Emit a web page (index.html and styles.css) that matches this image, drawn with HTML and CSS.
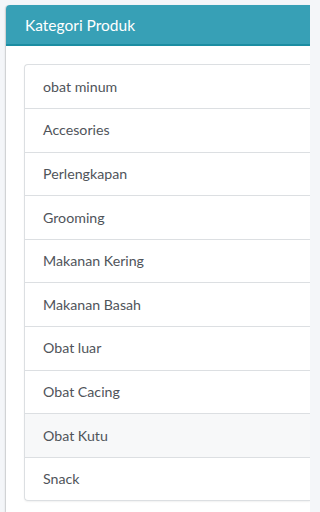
FILE: index.html
```html
<!DOCTYPE html>
<html lang="id">
<head>
<meta charset="utf-8">
<title>Kategori Produk</title>
<link rel="stylesheet" href="styles.css">
</head>
<body>
<div class="card">
  <div class="card-header">
    <h3 class="card-title">Kategori Produk</h3>
  </div>
  <div class="card-body">
    <ul class="list-group">
      <li class="list-group-item">obat minum</li>
      <li class="list-group-item">Accesories</li>
      <li class="list-group-item">Perlengkapan</li>
      <li class="list-group-item">Grooming</li>
      <li class="list-group-item">Makanan Kering</li>
      <li class="list-group-item">Makanan Basah</li>
      <li class="list-group-item">Obat luar</li>
      <li class="list-group-item">Obat Cacing</li>
      <li class="list-group-item is-hover">Obat Kutu</li>
      <li class="list-group-item">Snack</li>
    </ul>
  </div>
</div>
</body>
</html>
```
FILE: styles.css
```css
html, body {
  margin: 0;
  padding: 0;
  background: #f4f6f9;
}
body {
  font-family: Lato, "Open Sans", sans-serif;
  color: #495057;
  box-sizing: border-box;
  width: 310px;
  height: 512px;
  padding: 5px 0 0 6px;
  display: flex;
  flex-direction: column;
}
.card {
  flex: 1;
  background: #fff;
  border-radius: 4px 0 0 0;
  box-shadow: -1px 0 1px rgba(0,0,0,.10), -1px 1px 2px rgba(0,0,0,.08);
}
.card-header {
  background: #37a0b6;
  border-bottom: 2px solid #1b8da2;
  border-radius: 4px 0 0 0;
  height: 39px;
  padding: 0 0 0 19px;
  display: flex;
  align-items: center;
}
.card-title {
  margin: 0;
  font-size: 15.5px;
  font-weight: 400;
  color: #fff;
}
.card-body {
  padding: 18px 0 0 18px;
}
.list-group {
  list-style: none;
  margin: 0;
  padding: 0;
  border: 1px solid #dcdfe2;
  border-right: none;
  border-radius: 4px 0 0 4px;
  box-shadow: 0 1px 2px rgba(0,0,0,.06);
}
.list-group-item {
  font-size: 14.2px;
  line-height: 20px;
  padding: 11.3px 0 11.3px 18px;
  border-top: 1px solid #dcdfe2;
  color: #4f545a;
}
.list-group-item:first-child {
  border-top: none;
  padding-top: 11.8px;
}
.list-group-item.is-hover {
  background: #f7f8f9;
}
```
